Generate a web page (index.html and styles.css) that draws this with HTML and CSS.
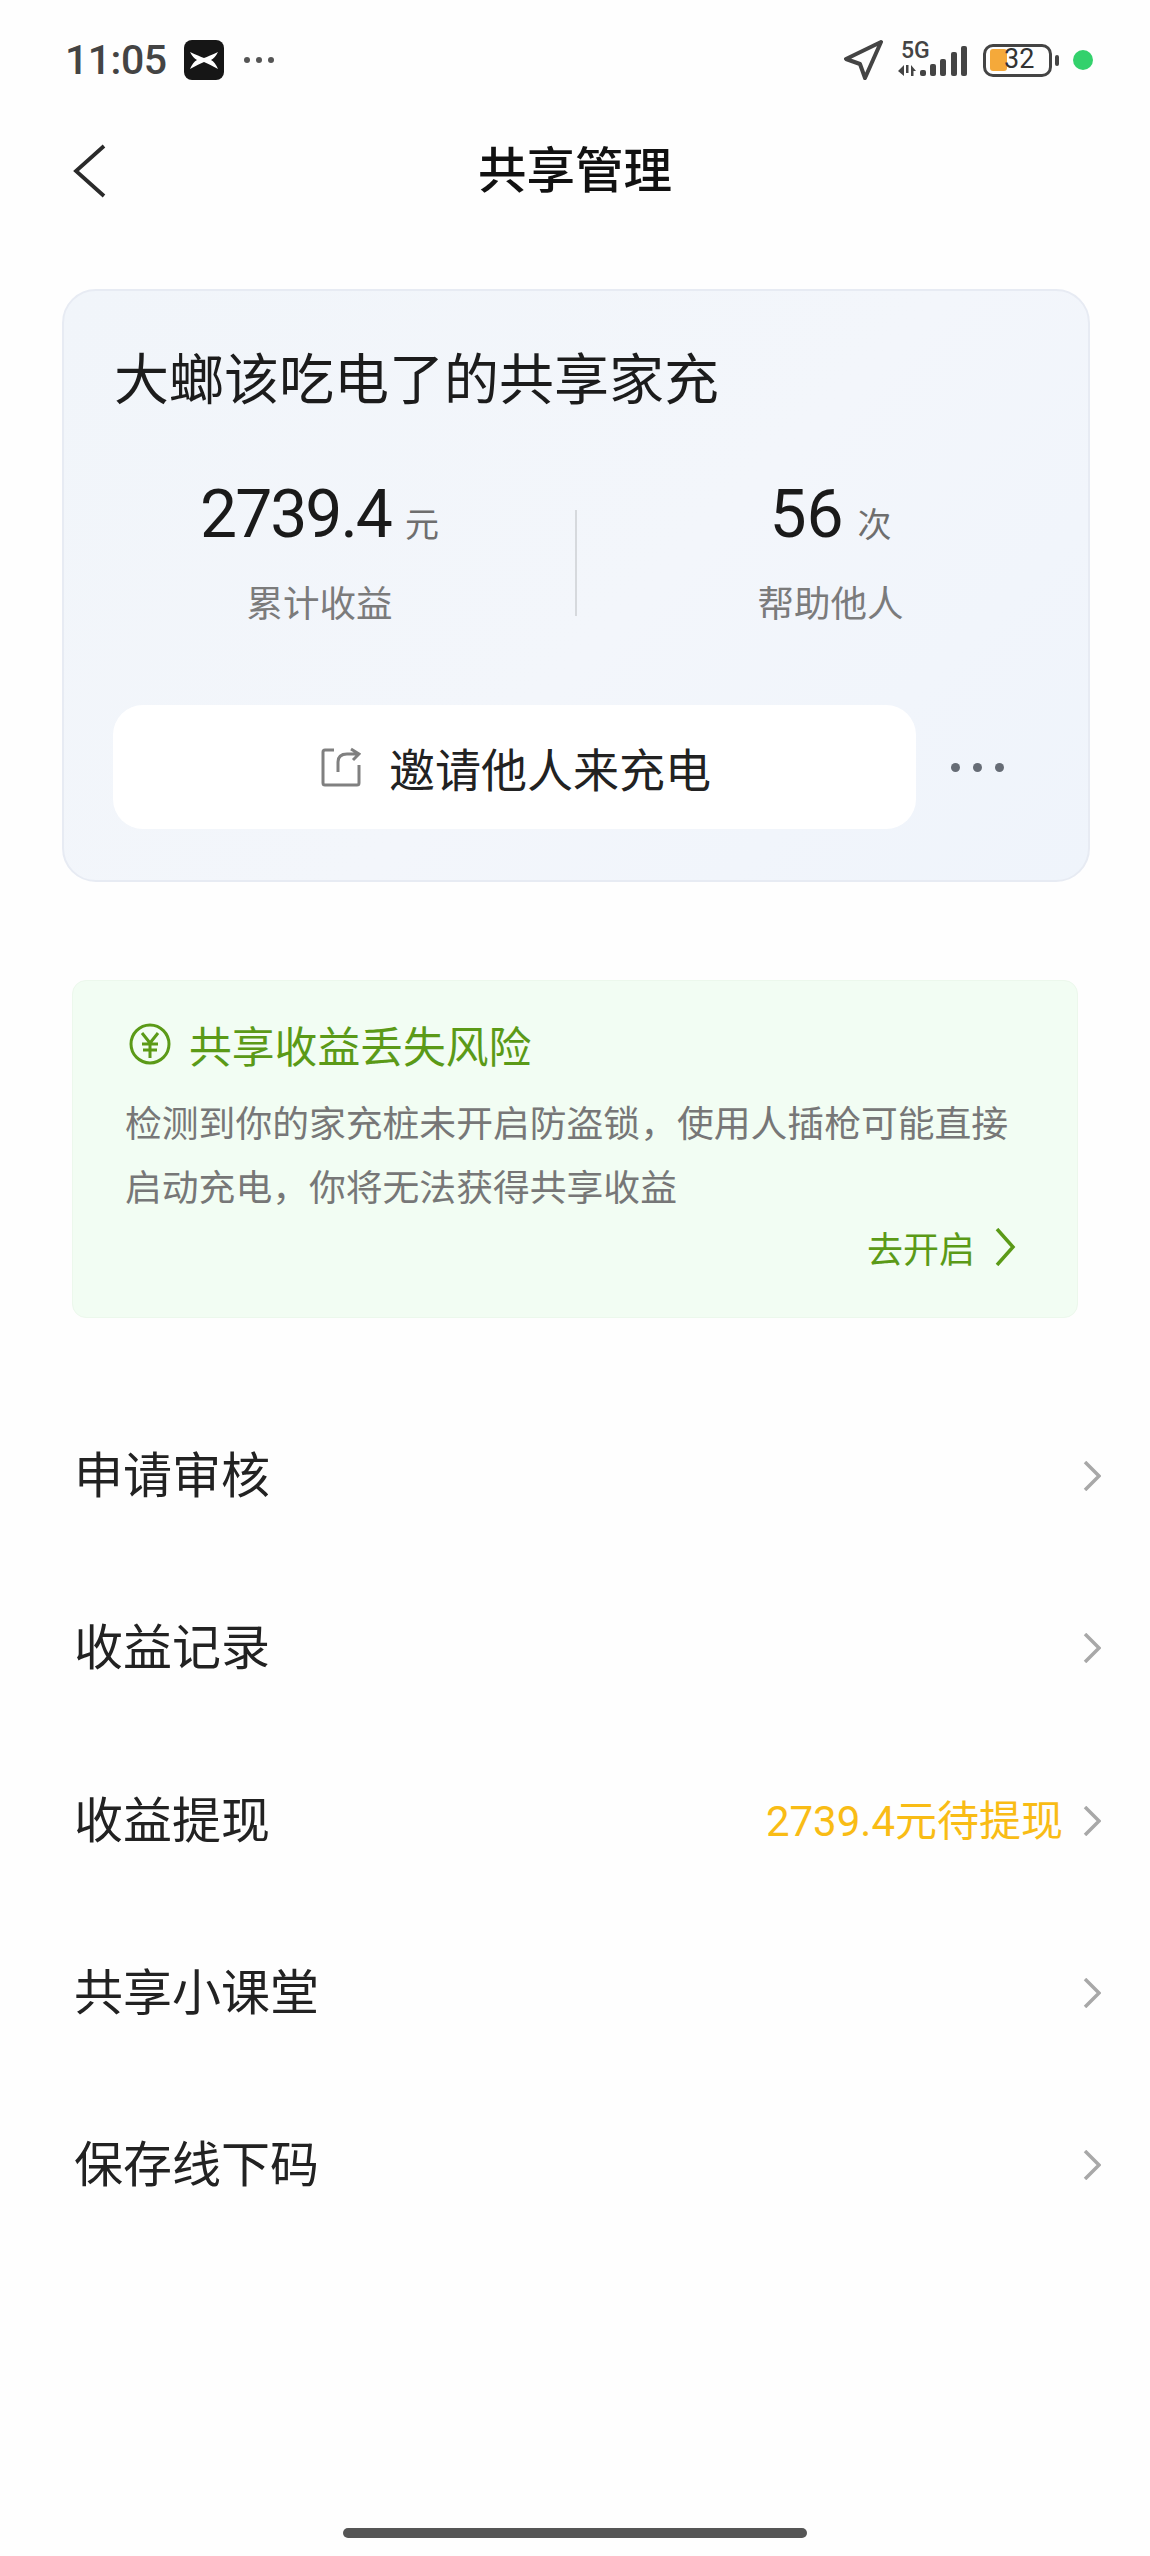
FILE: index.html
```html
<!DOCTYPE html>
<html lang="zh-CN">
<head>
    <meta charset="UTF-8">
    <meta name="viewport" content="width=device-width, initial-scale=1.0">
    <title>共享管理</title>
    <link rel="stylesheet" href="styles.css">
</head>
<body>
    <div class="statusbar">
        <div class="status-left">
            <span class="clock">11:05</span>
            <svg class="app-icon" width="40" height="40" viewBox="0 0 40 40">
                <rect width="40" height="40" rx="8" fill="#161616"/>
                <path d="M6 12 Q15 16 20 18 Q25 16 34 12 Q31 18 27 20 Q31 22 34 29 Q25 24 20 22 Q15 24 6 29 Q9 22 13 20 Q9 18 6 12Z" fill="#fff"/>
            </svg>
            <span class="more-dots"><i></i><i></i><i></i></span>
        </div>
        <div class="status-right">
            <svg class="loc-icon" width="39" height="40" viewBox="0 0 39 40">
                <path d="M37 2 L2 19 L16 24 L21 38Z" fill="none" stroke="#444" stroke-width="4" stroke-linejoin="round"/>
            </svg>
            <div class="net">
                <span class="net-text">5G</span>
                <svg width="69" height="36" viewBox="0 0 69 36">
                    <g fill="#444">
                        <path d="M0 29 L6 23 V34Z M8 23 H10.500 V31 H8Z M13 34 V23 L18 29 H15.500 V34Z"/>
                        <rect x="22" y="28" width="6" height="6" rx="2"/>
                        <rect x="32" y="22" width="6" height="12" rx="2"/>
                        <rect x="42" y="17" width="6" height="17" rx="2"/>
                        <rect x="53" y="10" width="6" height="24" rx="2"/>
                        <rect x="63" y="4" width="6" height="30" rx="2"/>
                    </g>
                </svg>
            </div>
            <div class="battery">
                <span class="battery-fill"></span>
                <span class="battery-num">32</span>
            </div>
            <span class="battery-nub"></span>
            <span class="cam-dot"></span>
        </div>
    </div>

    <div class="navbar">
        <svg class="back" width="34" height="54" viewBox="0 0 34 54">
            <path d="M31 2 L3 27 L31 52" fill="none" stroke="#2a2a2a" stroke-width="3.800"/>
        </svg>
        <h1>共享管理</h1>
    </div>

    <div class="share-card">
        <div class="share-name">大螂该吃电了的共享家充</div>
        <div class="stats">
            <div class="stat">
                <div class="stat-value"><span class="num tight">2739.4</span><span class="unit">元</span></div>
                <div class="stat-label">累计收益</div>
            </div>
            <div class="stat-line"></div>
            <div class="stat stat-right">
                <div class="stat-value"><span class="num">56</span><span class="unit">次</span></div>
                <div class="stat-label">帮助他人</div>
            </div>
        </div>
        <div class="invite-row">
            <div class="invite-btn">
                <svg width="40" height="40" viewBox="0 0 40 40">
                    <path d="M13 3 H4 Q2 3 2 5 V36 Q2 38 4 38 H36 Q38 38 38 36 V18 M17 25 V15 Q17 7 26 7 H38 M30 2 L38 7 L32 13" fill="none" stroke="#808080" stroke-width="3"/>
                </svg>
                <span>邀请他人来充电</span>
            </div>
            <div class="invite-more"><i></i><i></i><i></i></div>
        </div>
    </div>

    <div class="risk-card">
        <div class="risk-head">
            <svg width="42" height="42" viewBox="0 0 42 42">
                <circle cx="21" cy="21" r="19" fill="none" stroke="#5b9a17" stroke-width="3"/>
                <path d="M13 10 L21 20 L29 10 M13 21 H29 M14 27 H28 M21 20 V35" fill="none" stroke="#5b9a17" stroke-width="3"/>
            </svg>
            <span>共享收益丢失风险</span>
        </div>
        <p class="risk-text">检测到你的家充桩未开启防盗锁，使用人插枪可能直接启动充电，你将无法获得共享收益</p>
        <div class="risk-link">
            <span>去开启</span>
            <svg width="22" height="38" viewBox="0 0 22 38">
                <path d="M3 1 L19 19 L3 37" fill="none" stroke="#5b9a17" stroke-width="3.500"/>
            </svg>
        </div>
    </div>

    <ul class="menu">
        <li>
            <span class="menu-name">申请审核</span>
            <svg class="arrow" width="18" height="30" viewBox="0 0 18 30"><path d="M2 1 L16 15 L2 29"/></svg>
        </li>
        <li>
            <span class="menu-name">收益记录</span>
            <svg class="arrow" width="18" height="30" viewBox="0 0 18 30"><path d="M2 1 L16 15 L2 29"/></svg>
        </li>
        <li>
            <span class="menu-name">收益提现</span>
            <span class="pending">2739.4元待提现</span>
            <svg class="arrow" width="18" height="30" viewBox="0 0 18 30"><path d="M2 1 L16 15 L2 29"/></svg>
        </li>
        <li>
            <span class="menu-name">共享小课堂</span>
            <svg class="arrow" width="18" height="30" viewBox="0 0 18 30"><path d="M2 1 L16 15 L2 29"/></svg>
        </li>
        <li>
            <span class="menu-name">保存线下码</span>
            <svg class="arrow" width="18" height="30" viewBox="0 0 18 30"><path d="M2 1 L16 15 L2 29"/></svg>
        </li>
    </ul>

    <div class="home-bar"></div>
</body>
</html>
```

FILE: styles.css
```css
* {
    box-sizing: border-box;
}
body {
    font-family: Roboto, "Noto Sans CJK SC", sans-serif;
    display: flex;
    flex-direction: column;
    width: 1150px;
    height: 2556px;
    margin: 0;
    background-color: #fefefe;
    color: #222;
    overflow: hidden;
}
svg {
    display: block;
    flex: none;
}

/* status bar */
.statusbar {
    display: flex;
    justify-content: space-between;
    align-items: center;
    height: 118px;
    padding: 2px 57px 0 65px;
}
.status-left, .status-right {
    display: flex;
    align-items: center;
}
.clock {
    width: 119px;
    font-size: 41px;
    font-weight: 500;
    line-height: 50px;
    letter-spacing: -0.5px;
    color: #444;
}
.more-dots {
    display: flex;
    gap: 6px;
    margin-left: 20px;
}
.more-dots i {
    width: 6px;
    height: 6px;
    border-radius: 50%;
    background-color: #555;
}
.net {
    position: relative;
    margin-left: 15px;
}
.net-text {
    position: absolute;
    left: 3px;
    top: -5px;
    font-size: 23px;
    font-weight: 500;
    line-height: 27px;
    color: #444;
}
.battery {
    position: relative;
    width: 69px;
    height: 33px;
    margin-left: 16px;
    border: 3.500px solid #444;
    border-radius: 10px;
}
.battery-fill {
    position: absolute;
    left: 4px;
    top: 2px;
    width: 17px;
    height: 22px;
    border-radius: 3px;
    background-color: #f5a93a;
}
.battery-num {
    position: absolute;
    left: 18px;
    top: -4px;
    font-size: 27px;
    line-height: 33px;
    color: #333;
}
.battery-nub {
    width: 4px;
    height: 11px;
    margin-left: 3px;
    border-radius: 2px;
    background-color: #444;
}
.cam-dot {
    width: 20px;
    height: 20px;
    margin-left: 14px;
    border-radius: 50%;
    background-color: #33d16c;
}

/* nav */
.navbar {
    position: relative;
    display: flex;
    justify-content: center;
    align-items: center;
    height: 106px;
    padding-top: 2px;
}
.navbar h1 {
    margin: 0;
    font-size: 48.500px;
    font-weight: 500;
    line-height: 60px;
    color: #111;
}
.back {
    position: absolute;
    left: 73px;
    top: 26px;
}

/* share card */
.share-card {
    width: 1028px;
    height: 593px;
    margin: 65px 0 0 62px;
    border: 2px solid #e7ebf3;
    border-radius: 34px;
    background: linear-gradient(135deg, #f1f5fa, #f3f6fb 55%, #eff4fb);
}
.share-name {
    padding: 56px 0 0 50px;
    font-size: 55px;
    line-height: 66px;
    color: #1c1c1c;
}
.stats {
    display: grid;
    grid-template-columns: 1fr 2px 1fr;
    margin-top: 66px;
}
.stat {
    display: flex;
    flex-direction: column;
    align-items: center;
}
.stat-right {
    padding-right: 4px;
}
.stat-value {
    display: flex;
    align-items: baseline;
    height: 72px;
    line-height: 72px;
}
.num {
    font-size: 66px;
    color: #1a1a1a;
}
.tight {
    letter-spacing: -2px;
}
.unit {
    margin-left: 14px;
    font-size: 34px;
    color: #6e6e6e;
}
.stat-label {
    margin-top: 29px;
    font-size: 36.500px;
    line-height: 50px;
    color: #7b7b7b;
}
.stat-line {
    height: 106px;
    margin-top: 31px;
    background-color: #d6d9dd;
}
.invite-row {
    display: flex;
    align-items: center;
    margin-top: 75px;
    padding-left: 49px;
}
.invite-btn {
    display: flex;
    justify-content: center;
    align-items: center;
    gap: 28px;
    width: 803px;
    height: 124px;
    padding-left: 3px;
    border-radius: 30px;
    background-color: #fff;
    font-size: 46px;
    color: #222;
}
.invite-more {
    display: flex;
    gap: 13px;
    margin-left: 35px;
}
.invite-more i {
    width: 9px;
    height: 9px;
    border-radius: 50%;
    background-color: #666c75;
}

/* risk card */
.risk-card {
    width: 1006px;
    height: 338px;
    margin: 98px 0 0 72px;
    padding: 42px 52px 0;
    border: 1px solid #ecf8ec;
    border-radius: 14px;
    background-color: #f2fdf3;
}
.risk-head {
    display: flex;
    align-items: center;
    gap: 18px;
    height: 42px;
    padding-left: 4px;
    font-size: 42.800px;
    color: #5b9a17;
}
.risk-text {
    margin: 28px 0 0;
    font-size: 36.800px;
    line-height: 64px;
    color: #777;
}
.risk-link {
    display: flex;
    justify-content: flex-end;
    align-items: center;
    gap: 19px;
    margin-top: -4px;
    margin-right: 9px;
    height: 60px;
    font-size: 36px;
    color: #5b9a17;
}

/* menu */
.menu {
    margin: 72px 0 0;
    padding: 0;
    list-style: none;
}
.menu li {
    display: flex;
    align-items: center;
    height: 172.300px;
    padding: 0 49px 0 74px;
    font-size: 49px;
    color: #222;
}
.menu-name {
    margin-bottom: 9px;
}
.pending {
    margin-left: auto;
    margin-bottom: 6px;
    font-size: 42px;
    color: #f9bc15;
}
.arrow {
    margin-left: auto;
}
.pending + .arrow {
    margin-left: 20px;
}
.arrow path {
    fill: none;
    stroke: #a8a8a8;
    stroke-width: 3.500;
}

.home-bar {
    width: 464px;
    height: 10px;
    margin: auto 0 18px 343px;
    border-radius: 5px;
    background-color: #555;
}
```
